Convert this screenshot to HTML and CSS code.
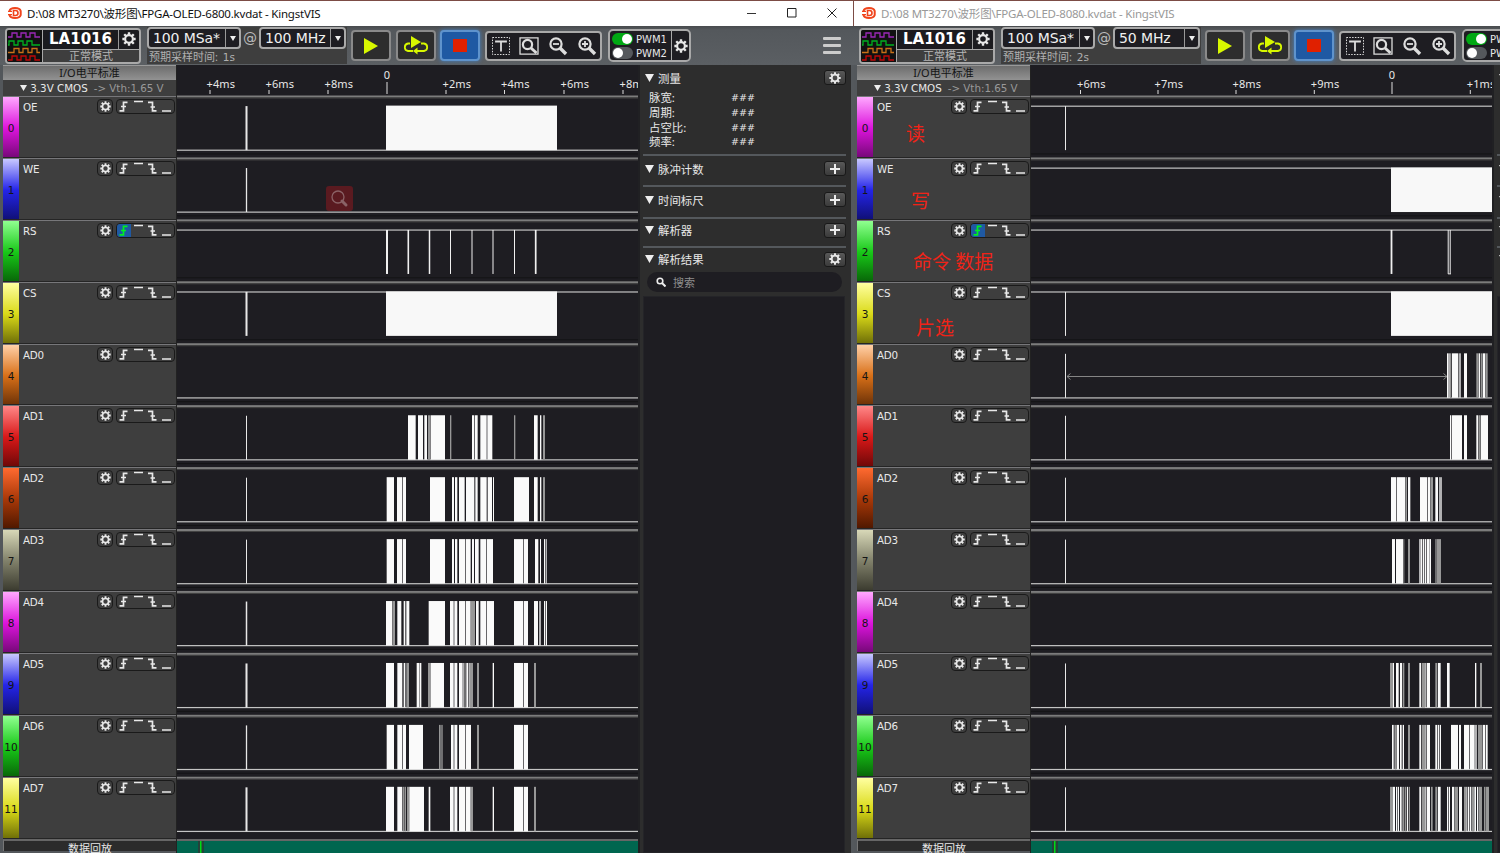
FILE: index.html
```
<!DOCTYPE html>
<html lang="zh-CN">
<head>
<meta charset="utf-8">
<title>KingstVIS</title>
<link rel="stylesheet" href="styles.css">
</head>
<body>
<svg class="defs" width="0" height="0" aria-hidden="true">
  <symbol id="gear" viewBox="-10 -10 20 20">
    <circle r="5.5" fill="none" stroke="currentColor" stroke-width="3"/>
    <g stroke="currentColor" stroke-width="3.4">
      <path d="M0-6V-9.5M0 6V9.5M-6 0H-9.5M6 0H9.5M-4.3-4.3L-6.8-6.8M4.3-4.3L6.8-6.8M-4.3 4.3L-6.8 6.8M4.3 4.3L6.8 6.8"/>
    </g>
  </symbol>
</svg>
<main class="desktop" id="desktop"></main>
<script src="app.js"></script>
</body>
</html>
```
FILE: styles.css
```
* { box-sizing: border-box; }
body {
  margin: 0;
  width: 1500px;
  height: 853px;
  overflow: hidden;
  background: #2d2d2d;
  color: #e8e8e8;
  font-family: "Noto Sans", "Noto Sans CJK SC", sans-serif;
  font-size: 11px;
}
svg { display: block; flex: none; }
.defs { position: absolute; }
.desktop { display: flex; width: 1500px; height: 853px; overflow: hidden; }
.window {
  flex: none;
  width: 854px;
  height: 853px;
  display: flex;
  flex-direction: column;
  background: #53575b;
  border-top: 1px solid #7c4c45;
  overflow: hidden;
}
.titlebar {
  flex: none;
  height: 25px;
  display: flex;
  align-items: center;
  background: #fff;
  color: #111;
  padding: 0 16px 1px 8px;
  font-size: 11.5px;
  letter-spacing: -.21px;
}
.inactive .titlebar { color: #999; }
.title { margin-left: 5px; flex: 1; white-space: pre; }
.controls { display: flex; gap: 30px; }
.inactive .controls { opacity: .5; }
.window:not(.inactive) .titlebar { border-right: 1px solid #7c4c45; }

.toolbar {
  flex: none;
  height: 39px;
  display: flex;
  align-items: center;
  padding-left: 5px;
  background: linear-gradient(#484b4e, #54585c 4px, #5b5f63);
}
.device {
  width: 136px;
  height: 36px;
  border: 2px solid #a9a9a9;
  border-radius: 4px;
  display: flex;
  background: #3e3e3e;
  overflow: hidden;
}
.device-icon { background: #111; border-right: 1px solid #a9a9a9; width: 36px; }
.device-main { flex: 1; }
.device-top { display: flex; height: 20px; background: #1b1b1f; border-bottom: 1px solid #a9a9a9; }
.device-name { width: 76px; text-align: center; font: bold 15px/19px "DejaVu Sans", sans-serif; color: #fff; border-right: 1px solid #999; }
.device-gear { flex: 1; display: grid; place-items: center; }
.device-mode { text-align: center; color: #b5b5b5; font-size: 11px; line-height: 12px; }
.sampling { width: 200px; height: 37px; margin-left: 6px; background: #3e3e3e; }
.selects { display: flex; height: 22px; color: #bbb; font: 14px/22px "DejaVu Sans", sans-serif; }
.select { display: flex; border: 2px solid #a9a9a9; border-radius: 4px; background: #1e1d22; color: #f0f0f0; line-height: 18px; height: 22px; }
.select-a { width: 94px; }
.select-b { width: 87px; }
.select-text { flex: 1; padding-left: 4px; white-space: nowrap; font-size: 14px; letter-spacing: -.1px; }
.select-arrow { width: 14px; border-left: 1px solid #999; display: grid; place-items: center; }
.at { width: 18px; text-align: center; }
.estimate { color: #b0b0b0; font-size: 11px; line-height: 15px; padding-left: 2px; }
.estimate span { font: 10.5px "DejaVu Sans", sans-serif; margin-left: 2px; }
.tool {
  width: 40px;
  height: 31px;
  border: 2px solid #8a8a8a;
  border-radius: 4px;
  background: #2d2d2d;
  display: grid;
  place-items: center;
  margin-left: 4px;
}
.tool + .tool { margin-left: 4.5px; }
.tool.stop { background: #1f59a3; border-color: #5f93cc; box-shadow: 0 0 4px #3f7fc4; }
.zoomgroup {
  width: 117px; height: 30px; margin-left: 5px;
  border: 2px solid #a9a9a9; border-radius: 4px; background: #1e1d22;
  display: flex; align-items: center; gap: 9px; padding-left: 5px;
}
.pwm { width: 83px; height: 33px; margin-left: 6px; border: 2px solid #a9a9a9; border-radius: 5px; background: #1e1d22; display: flex; }
.pwm-list { width: 62px; border-right: 1px solid #a9a9a9; padding: 1px 0 0 2px; }
.pwm-row { display: flex; align-items: center; gap: 3px; height: 14px; font: 10px "DejaVu Sans", sans-serif; letter-spacing: 0; }
.switch { width: 21px; height: 12px; border-radius: 6px; background: #55585c; display: flex; padding: 1px; }
.switch::before { content: ""; width: 10px; height: 10px; border-radius: 50%; background: #fff; }
.switch.on { background: #00a813; justify-content: flex-end; }
.pwm-gear { flex: 1; display: grid; place-items: center; }
.menu { margin-left: auto; margin-right: 13px; width: 18px; display: grid; gap: 4px; }
.menu i { height: 3px; border-radius: 1px; background: #ccc; }

.work { flex: 1; display: flex; min-height: 0; padding-left: 3px; }
.channels { width: 174px; border-right: 1px solid #222; }
.std { height: 15px; background: linear-gradient(#6d6d6d, #929292); border-top: 1px solid #999; color: #151515; text-align: center; line-height: 14px; font-size: 11px; }
.level { height: 16px; background: #3e3e3e; display: flex; align-items: center; padding-left: 17px; font: 10.3px "DejaVu Sans", sans-serif; white-space: nowrap; }
.level span { color: #999; margin-left: 6px; }
.channel { height: 61.9px; display: flex; background: #3e3e3e; border-top: 1px solid #77777a; border-bottom: 1px solid #252525; }
.chan-no { width: 16px; background: linear-gradient(var(--a), var(--b) 52%, var(--c)); color: #151515; display: grid; place-items: center; padding-top: 2px; font: 10.5px "DejaVu Sans", sans-serif; }
.chan-body { flex: 1; display: flex; padding: 1px 1px 0 4px; height: 20px; }
.chan-name { flex: 1; font: 10.3px/18px "DejaVu Sans", sans-serif; letter-spacing: -.2px; }
.chan-gear { width: 16px; height: 15px; border: 1px solid #1a1a1a; border-radius: 4px; display: grid; place-items: center; margin: 1px 3px 0 0; }
.trigger { width: 59px; height: 15px; border: 1px solid #1a1a1a; border-radius: 4px; margin-top: 1px; overflow: hidden; }
.footer { height: 12px; border-top: 2px solid #666; border-left: 1px solid #777; text-align: center; font-size: 11px; line-height: 15px; background: #2b2b2b; }

.waves { width: 461px; background: #1e1d22; }
.side { width: 216px; background: #2d2d2d; border-left: 2px solid #202023; border-right: 3px solid #54585c; padding: 0 5px 0 3px; display: flex; flex-direction: column; }
.section { display: flex; align-items: flex-start; justify-content: space-between; border-top: 2px solid #54585c; padding: 4px 0 0 2px; }
.section.first { border-top-color: transparent; height: 25px; padding-top: 3px; }
.section.counts, .section.rulers { height: 31.4px; padding-top: 5px; }
.section.parsers { height: 28.8px; padding-top: 4px; }
.section.results { height: 26.9px; padding-top: 4px; }
.head { display: flex; align-items: center; gap: 4px; height: 15px; font-size: 11.4px; }
.btn { width: 22px; height: 15px; border: 1px solid #191919; border-radius: 3px; background: linear-gradient(#595959, #3b3b3b); display: grid; place-items: center; }
.measures { height: 64px; padding: 0 0 0 6px; font-size: 11.4px; line-height: 15px; }
.measure { display: grid; grid-template-columns: 82px 1fr; height: 14.8px; }
.measure b { font: 9.5px/15px "DejaVu Sans", sans-serif; }
.search { height: 20px; margin: 0 4px; border-radius: 10px; background: #1e1d22; color: #8e8e8e; display: flex; align-items: center; gap: 7px; padding-left: 9px; font-size: 11px; flex: none; }
.results-list { flex: 1; margin: 4px 1px 0 0; background: #1e1d22; border: 1px solid #242428; }
.wave-text { font: 11px "Noto Sans", sans-serif; fill: #e8e8e8; }
.note { position: absolute; color: #f02318; font: 19px/24px "Noto Sans CJK SC", sans-serif; white-space: pre; }
.lens { position: absolute; left: 326px; top: 186px; }
```
FILE: app.js
```
const rowPitch = 61.93;
const palette = [
  ['#ffa8ff', '#dc14dc', '#78087a'], ['#c8c8ff', '#2424e8', '#101078'],
  ['#90ff90', '#18c818', '#086808'], ['#ffffa0', '#dada18', '#707008'],
  ['#ffd0a8', '#d87018', '#703408'], ['#ff8888', '#d81818', '#700808'],
  ['#ff6a30', '#a83808', '#501800'], ['#d8d8b8', '#80806a', '#3c3c30']
];
const names = ['OE', 'WE', 'RS', 'CS', 'AD0', 'AD1', 'AD2', 'AD3', 'AD4', 'AD5', 'AD6', 'AD7'];

/* Pulses are "start-end" in thirds of a pixel from the block origin; a trailing g marks a dense, dimmer burst. */
const windows = [
  {
    title: 'D:\\08 MT3270\\波形图\\FPGA-OLED-6800.kvdat - KingstVIS', rate: '100 MHz', time: '1s', inactive: false,
    ticks: [[33, '+4ms'], [92, '+6ms'], [151, '+8ms'], [210, '0'], [269, '+2ms'], [327.5, '+4ms'], [387, '+6ms'], [446, '+8ms']],
    high: [2, 3], spikeX: 69.5, spikes: { 0: 2, 1: 1.3, 3: 2, 5: 1, 6: 1, 7: 1, 8: 1.5, 9: 2, 10: 1.3, 11: 2 },
    blocks: { 0: [209, 380], 3: [209, 380] },
    dips: [[210, 2], [231.3, 1.6], [252.5, 1.5], [273.5, 1], [295, 1], [316, 1], [337.5, 1], [358.7, 1.7]],
    origin: 193,
    data: {
      5: '114-137 144-159 163-171 174-181g 182-225 240-244g 306-313 315-323 331-350 352-367 432-436g 492-503 510-514 519-525g',
      6: '50-72 81-97 99-108 180-225 246-252 255-262 267-284 288-313 316-323 331-350 353-366 369-372 432-477 492-503 510-514 519-525g',
      7: '50-72 81-97 99-108 180-225 246-252 255-262 267-286 288-302 306-312 315-326 331-348 350-369 432-459 461-474 495-505 510-513 522-525 527-530',
      8: '48-67 68-75g 82-94 101-105 107-110 111-118 176-225 240-251 253-262 267-286 288-302 302-315g 318-326 331-348 350-372 432-459 461-474 492-504 508-512 522-525 527-531',
      9: '48-72 82-97 101-106 109-117g 140-148 149-154 174-182g 182-222 240-251 253-262 267-276 277-281 283-287g 289-295 297-299 300-309g 321-327g 368-372 432-459 461-474 492-498g',
      10: '50-72 82-97 99-108 117-159 207-212g 214-218g 243-251 253-262 267-286 288-303 321-327g 432-459 461-474',
      11: '48-72 82-97 99-103g 104-108g 111-118g 118-162 176-181 240-251 253-262 267-286 288-302 302-309g 368-372 432-459 461-474 492-498g'
    }
  },
  {
    title: 'D:\\08 MT3270\\波形图\\FPGA-OLED-8080.kvdat - KingstVIS', rate: '50 MHz', time: '2s', inactive: true,
    ticks: [[49.5, '+6ms'], [127, '+7ms'], [205, '+8ms'], [283.3, '+9ms'], [361, '0'], [439.3, '+1ms']],
    high: [0, 1, 2, 3], spikeX: 34.5, spikes: { 0: 1, 3: 1, 4: 1, 5: 1, 6: 1, 7: 1, 9: 1, 10: 1, 11: 1 },
    blocks: { 1: [360, 461], 3: [360, 461] },
    dips: [[360.5, 1.8], [417.2, 1], [419.2, 1]], span: true,
    origin: 339,
    data: {
      4: '231-234 235-239 240-244g 246-265 268-272 282-291 319-325g 326-330 332-338g 339-346 347-353g',
      5: '240-244 246-276 282-291 319-325 327-332g 333-354',
      6: '63-79 81-84 84-105 106-111g 114-121 150-171 173-180 181-189g 196-204 207-209 211-215',
      7: '66-75 78-99 100-103g 114-120g 148-152 153-156 158-163 165-168 170-177 178-183 196-200g 201-213g',
      9: '60-69g 69-72 78-86 90-96 98-103g 114-120g 148-153 155-165g 166-169 171-180 196-202g 204-212 231-239 315-319 330-336g',
      10: '66-69 70-73 75-79g 80-87 90-95 98-102 114-120g 148-153 155-165g 166-169 171-180 196-202 204-208 210-213 243-264 267-273 282-298 300-314 316-320 324-336g 338-345 347-353',
      11: '60-69g 69-75 78-82 84-87 90-95 97-103g 105-109g 111-114 116-120g 148-153 155-166g 166-169 171-180 183-188g 196-202g 204-212 231-234 236-240 246-252 253-264g 267-276 282-288g 289-292 294-298 300-304 306-312g 313-318 321-325 327-336g 342-346g 347-357g'
    }
  }
];

const gear = s => `<svg width="${s}" height="${s}"><use href="#gear"/></svg>`;
const down = (w, h) => `<svg width="${w}" height="${h}" viewBox="0 0 10 10" preserveAspectRatio="none"><path d="M0 0H10L5 10Z" fill="#eee"/></svg>`;
const plus = '<svg width="10" height="10"><path d="M0 5H10M5 0V10" stroke="#eee" stroke-width="2"/></svg>';
const lens = inner => `<svg width="20" height="20" viewBox="0 0 20 20" fill="none" stroke="#ddd"><circle cx="8" cy="8" r="5.6" stroke-width="2.2"/><path d="M12 12L18 18" stroke-width="3.4"/>${inner}</svg>`;
const rect = (x, y, w, h, f) => `<rect x="${x}" y="${y}" width="${w}" height="${h}" fill="${f}" stroke="none"/>`;

function titlebar(w) {
  return `<header class="titlebar">
    <svg width="14" height="12" viewBox="0 0 14 12" fill="none" stroke="#f0441c"><path d="M1.500 4C2.500 0 11.500 0 12.700 4V8C11.500 12 2.500 12 1.500 8" stroke-width="2"/><path d="M0 4.300H4M0 7.700H4" stroke-width="1.300"/><path d="M5.500 3.500H7.500A2.500 2.500 0 0 1 7.500 8.500H5.500Z" stroke-width="1.600"/></svg>
    <span class="title">${w.title}</span>
    <span class="controls">
      <svg width="10" height="10"><path d="M0 5.500H9" stroke="#333"/></svg>
      <svg width="10" height="10"><path d="M.5 .5H9V9H.5Z" fill="none" stroke="#222"/></svg>
      <svg width="10" height="10"><path d="M.5 .5L9.500 9.500M9.500 .5L.5 9.500" stroke="#222"/></svg>
    </span></header>`;
}

function toolbar(w) {
  const squares = [['#9c28b8', 3, 0], ['#00b020', 11, -3], ['#c87018', 18.500, 2], ['#c00808', 26, 0]].map(([c, y, s]) =>
    `<path d="M1 ${y + 4}H${5 + s}V${y}H${10 + s}V${y + 4}H${14 + s}V${y}H${19 + s}V${y + 4}H${23 + s}V${y}H${28 + s}V${y + 4}H33" fill="none" stroke="${c}" stroke-width="1.300"/>`).join('');
  const select = (cls, text) => `<div class="select ${cls}"><span class="select-text">${text}</span><span class="select-arrow">${down(6, 5)}</span></div>`;
  return `<div class="toolbar">
    <div class="device"><svg class="device-icon" width="36" height="32">${squares}</svg>
      <div class="device-main"><div class="device-top"><span class="device-name">LA1016</span><span class="device-gear">${gear(14)}</span></div>
      <div class="device-mode">正常模式</div></div></div>
    <div class="sampling"><div class="selects">${select('select-a', '100 MSa*')}<span class="at">@</span>${select('select-b', w.rate)}</div>
      <div class="estimate">预期采样时间: <span>${w.time}</span></div></div>
    <div class="tool"><svg width="16" height="18"><path d="M1 1L15 9L1 17Z" fill="#d8f800"/></svg></div>
    <div class="tool"><svg width="26" height="19" viewBox="0 0 26 19"><path d="M8 0L18 6L8 12Z" fill="#d8f800"/><path d="M7 7.500H5A3.800 3.800 0 0 0 5 15H10M18 7.500H21A3.800 3.800 0 0 1 21 15H13" fill="none" stroke="#d8f800" stroke-width="1.800"/><path d="M14.500 11.500V18.500L10 15Z" fill="#d8f800"/></svg></div>
    <div class="tool stop"><svg width="14" height="13">${rect(0, 0, 14, 13, '#e02000')}</svg></div>
    <div class="zoomgroup">
      <svg width="18" height="18" fill="none" stroke="#ddd"><path d="M.5 .5H17.500V17.500H.5Z" stroke-dasharray="1.500 1.300"/><path d="M4 5.500V4.500H14V5.500M9 4.500V14.500" stroke-width="1.800"/></svg>
      <svg width="20" height="18" viewBox="0 0 20 18" fill="none" stroke="#ddd"><path d="M1 .8H19V17.200H1Z" stroke-width="1.300"/><circle cx="8.500" cy="7.500" r="4.600" stroke-width="2.200"/><path d="M12 11L17.500 16" stroke-width="3"/></svg>
      ${lens('<path d="M5 8H11" stroke-width="1.800"/>')}${lens('<path d="M5 8H11M8 5V11" stroke-width="1.800"/>')}
    </div>
    <div class="pwm"><div class="pwm-list"><div class="pwm-row"><i class="switch on"></i>PWM1</div><div class="pwm-row"><i class="switch"></i>PWM2</div></div><span class="pwm-gear">${gear(14)}</span></div>
    <div class="menu"><i></i><i></i><i></i></div></div>`;
}

function channel(name, i) {
  const [a, b, c] = palette[i % 8], on = i === 2;
  return `<div class="channel"><div class="chan-no" style="--a:${a};--b:${b};--c:${c}">${i}</div>
    <div class="chan-body"><span class="chan-name">${name}</span><span class="chan-gear">${gear(11)}</span>
    <svg class="trigger" width="59" height="15" fill="none" stroke="#e8e8e8" stroke-width="1.700">${on ? rect(0, 0, 14, 15, '#1f59a3') : ''}
      <path d="M2.500 10.800H6.500V2.300H10.500M4 6.500H9" stroke="${on ? '#00f020' : '#e8e8e8'}"/><path d="M17 1.500H26"/><path d="M31 2.300H35.500V10.800H39.500M33.500 7H38"/><path d="M45 11H54"/></svg></div></div>`;
}

function waves(w) {
  let s = '';
  for (const [x, label] of w.ticks) {
    const zero = label === '0';
    s += rect(x - .5, zero ? 17 : 25, 1, zero ? 12 : 4, '#ddd');
    s += `<text class="wave-text" x="${zero ? x : x - 3.500}" y="${zero ? 14 : 23}" ${zero ? 'text-anchor="middle"' : 'textLength="28.5"'}>${label}</text>`;
  }
  names.forEach((_, i) => {
    const y = 30.5 + i * rowPitch, top = y + 10.6, low = y + 54.6;
    s += rect(0, y, 461, 2, '#7c7c7c') + rect(0, y + 2, 461, 1, '#444');
    if (i) s += rect(0, y - 4, 461, 1, '#141416');
    const high = w.high.includes(i);
    s += rect(0, high ? top - .5 : low - .5, 461, 1.2, '#c4c4c4');
    if (w.spikes[i]) s += rect(w.spikeX - w.spikes[i] / 2, top, w.spikes[i], 44, '#e8e8e8');
    if (w.blocks[i]) s += rect(w.blocks[i][0], top - .5, w.blocks[i][1] - w.blocks[i][0], 44.5, '#f8f8f8');
    for (const item of (w.data[i] || '').split(' ').filter(Boolean)) {
      const [a, b] = item.split('-').map(parseFloat);
      s += rect((w.origin + a / 3).toFixed(2), top - .5, ((b - a) / 3).toFixed(2), 44.5, item.endsWith('g') ? '#979797' : '#fafafa');
    }
    if (i === 2) for (const [x, t] of w.dips) s += rect(x - t / 2, top, t, 44, '#f0f0f0');
  });
  if (w.span) {
    s += rect(417, 2 * rowPitch + 84.5, 3, 1, '#ddd');
    s += '<path d="M36 311.500H416M39.500 308.500L36 311.500L39.500 314.500M412.500 308.500L416 311.500L412.500 314.500" fill="none" stroke="#858585"/>';
  }
  s += rect(0, 774, 461, 2, '#666') + rect(0, 776, 461, 20, '#00664f') + rect(21, 776, 6, 20, '#25413a') + rect(23, 776, 1.500, 20, '#00dc14');
  return `<svg class="waves" width="461" height="788">${s}</svg>`;
}

function side() {
  const section = (cls, t, icon) => `<div class="section ${cls}"><span class="head">${down(9, 8)}${t}</span><span class="btn">${icon}</span></div>`;
  return `<aside class="side">${section('first', '测量', gear(12))}
    <div class="measures">${['脉宽:', '周期:', '占空比:', '频率:'].map(t => `<div class="measure"><span>${t}</span><b>###</b></div>`).join('')}</div>
    ${section('counts', '脉冲计数', plus)}${section('rulers', '时间标尺', plus)}${section('parsers', '解析器', plus)}${section('results', '解析结果', gear(12))}
    <div class="search"><svg width="10" height="10" fill="none" stroke="#eee"><circle cx="4" cy="4" r="2.800" stroke-width="1.600"/><path d="M6 6L9.500 9.500" stroke-width="2"/></svg>搜索</div>
    <div class="results-list"></div></aside>`;
}

document.getElementById('desktop').innerHTML = windows.map(w => `<section class="window ${w.inactive ? 'inactive' : ''}">
  ${titlebar(w)}${toolbar(w)}
  <div class="work"><div class="channels"><div class="std">I/O电平标准</div><div class="level">${down(7, 6)}&nbsp;3.3V CMOS<span>-&gt; Vth:1.65 V</span></div>
  ${names.map(channel).join('')}<div class="footer">数据回放</div></div>${waves(w)}${side()}</div></section>`).join('') +
  [['读', 906, 121], ['写', 911, 188], ['命令 数据', 913, 249], ['片选', 916, 315]].map(([t, x, y]) => `<span class="note" style="left:${x}px;top:${y}px">${t}</span>`).join('') +
  '<svg class="lens" width="27" height="25" fill="none"><rect width="27" height="25" rx="3" fill="#5a1a20"/><circle cx="12" cy="11" r="6" stroke="#8a6266" stroke-width="1.300"/><path d="M16 15L20 19" stroke="#8a6266" stroke-width="3" stroke-linecap="round"/></svg>';
```
